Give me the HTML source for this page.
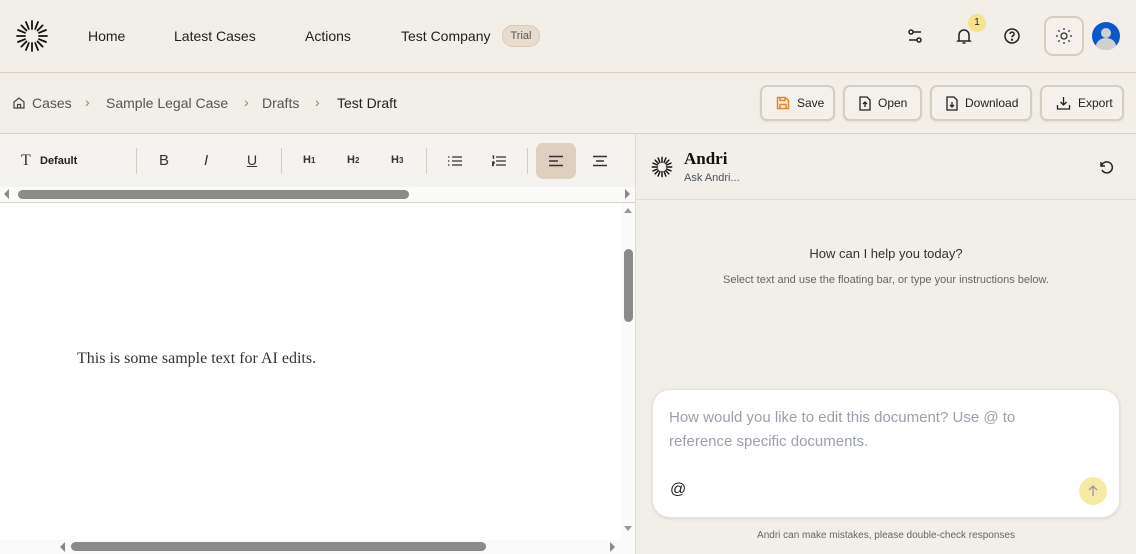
<!DOCTYPE html>
<html><head><meta charset="utf-8"><style>
*{box-sizing:border-box;margin:0;padding:0}
body{width:1136px;height:554px;overflow:hidden;background:#f2efe9;font-family:"Liberation Sans",sans-serif;color:#1f1f1f;position:relative}
.abs{position:absolute}
.nav{font-size:14px;top:28px}
.btn{position:absolute;top:85px;height:36px;border:2px solid #d7cdbf;border-radius:7px;background:#f4f1ec;font-size:12px;display:flex;align-items:center;gap:7px;padding-left:14px;box-shadow:0 1px 2px rgba(0,0,0,.08)}
.tb{position:absolute;top:154px;font-size:11px;color:#333}
.sep{position:absolute;top:148px;width:1px;height:26px;background:#d4cdc3}
svg{display:block}
</style></head><body>
<svg class="abs" style="left:15px;top:19px" width="34" height="34" viewBox="0 0 34 34">
<g stroke="#111" stroke-width="1.8" stroke-linecap="round">
<line x1="17" y1="2" x2="17" y2="10"/><line x1="17" y1="24" x2="17" y2="32"/>
<line x1="2" y1="17" x2="10" y2="17"/><line x1="24" y1="17" x2="32" y2="17"/>
<line x1="6.4" y1="6.4" x2="11.5" y2="11.5"/><line x1="22.5" y1="22.5" x2="27.6" y2="27.6"/>
<line x1="27.6" y1="6.4" x2="22.5" y2="11.5"/><line x1="11.5" y1="22.5" x2="6.4" y2="27.6"/>
<line x1="11" y1="3" x2="13.8" y2="10"/><line x1="23" y1="3" x2="20.2" y2="10"/>
<line x1="11" y1="31" x2="13.8" y2="24"/><line x1="23" y1="31" x2="20.2" y2="24"/>
<line x1="3" y1="11" x2="10" y2="13.8"/><line x1="3" y1="23" x2="10" y2="20.2"/>
<line x1="31" y1="11" x2="24" y2="13.8"/><line x1="31" y1="23" x2="24" y2="20.2"/>
</g></svg>
<div class="abs nav" style="left:88px">Home</div>
<div class="abs nav" style="left:174px">Latest Cases</div>
<div class="abs nav" style="left:305px">Actions</div>
<div class="abs nav" style="left:401px">Test Company</div>
<div class="abs" style="left:502px;top:25px;height:22px;width:38px;border-radius:11px;background:#e8dccf;border:1px solid #d8c9b8;font-size:11px;color:#555;text-align:center;line-height:20px">Trial</div>
<svg class="abs" style="left:906px;top:27px" width="18" height="18" viewBox="0 0 18 18" fill="none" stroke="#222" stroke-width="1.5"><circle cx="5" cy="5" r="2"/><line x1="7" y1="5" x2="15" y2="5"/><circle cx="13" cy="13" r="2"/><line x1="3" y1="13" x2="11" y2="13"/></svg>
<svg class="abs" style="left:955px;top:27px" width="18" height="18" viewBox="0 0 18 18" fill="none" stroke="#222" stroke-width="1.5"><path d="M4 13V8a5 5 0 0 1 10 0v5l1 1H3z"/><path d="M7.5 16h3"/></svg>
<div class="abs" style="left:968px;top:14px;width:18px;height:18px;border-radius:9px;background:#f6e38a;font-size:10px;text-align:center;line-height:18px">1</div>
<svg class="abs" style="left:1003px;top:27px" width="18" height="18" viewBox="0 0 18 18" fill="none" stroke="#222" stroke-width="1.5"><circle cx="9" cy="9" r="7"/><path d="M7 7a2 2 0 1 1 2.5 2c-.5.2-.5.6-.5 1.3"/><circle cx="9" cy="12.7" r=".4" fill="#222"/></svg>
<div class="abs" style="left:1044px;top:16px;width:40px;height:40px;border:2px solid #d7cdbf;border-radius:9px;background:#f4f1ec"></div>
<svg class="abs" style="left:1054px;top:26px" width="20" height="20" viewBox="0 0 20 20" fill="none" stroke="#333" stroke-width="1.3"><circle cx="10" cy="10" r="3"/><path d="M10 2v2M10 16v2M2 10h2M16 10h2M4.3 4.3l1.4 1.4M14.3 14.3l1.4 1.4M4.3 15.7l1.4-1.4M14.3 5.7l1.4-1.4"/></svg>
<svg class="abs" style="left:1092px;top:22px" width="28" height="28" viewBox="0 0 28 28"><circle cx="14" cy="14" r="14" fill="#0b58c9"/><circle cx="14" cy="11" r="5" fill="#d0d0d0"/><path d="M4 24a10 8 0 0 1 20 0a14 14 0 0 1-20 0z" fill="#d0d0d0"/></svg>
<div class="abs" style="left:0;top:72px;width:1136px;height:1px;background:#d9cfc3"></div>
<svg class="abs" style="left:12px;top:96px" width="14" height="14" viewBox="0 0 14 14" fill="none" stroke="#444" stroke-width="1.2"><path d="M2 6l5-4 5 4v6H2z"/><path d="M5.5 12V8.5h3V12"/></svg>
<div class="abs" style="left:32px;top:95px;font-size:14px;color:#555">Cases</div>
<div class="abs" style="left:85px;top:94px;font-size:14px;color:#7a8a70">›</div>
<div class="abs" style="left:106px;top:95px;font-size:14px;color:#555">Sample Legal Case</div>
<div class="abs" style="left:244px;top:94px;font-size:14px;color:#7a8a70">›</div>
<div class="abs" style="left:262px;top:95px;font-size:14px;color:#555">Drafts</div>
<div class="abs" style="left:315px;top:94px;font-size:14px;color:#7a8a70">›</div>
<div class="abs" style="left:337px;top:95px;font-size:14px;color:#222">Test Draft</div>
<div class="btn" style="left:760px;width:75px"><svg width="14" height="14" viewBox="0 0 14 14" fill="none" stroke="#e8842a" stroke-width="1.5"><path d="M1.5 1.5h8l3 3v8h-11z"/><path d="M4 1.5v3h5v-3M4 12.5v-4h6v4"/></svg>Save</div>
<div class="btn" style="left:843px;width:79px"><svg width="12" height="15" viewBox="0 0 12 15" fill="none" stroke="#222" stroke-width="1.3"><path d="M1 1h7l3 3v10H1z"/><path d="M6 11V6M4 8l2-2 2 2"/></svg>Open</div>
<div class="btn" style="left:930px;width:102px"><svg width="12" height="15" viewBox="0 0 12 15" fill="none" stroke="#222" stroke-width="1.3"><path d="M1 1h7l3 3v10H1z"/><path d="M6 6v5M4 9l2 2 2-2"/></svg>Download</div>
<div class="btn" style="left:1040px;width:84px"><svg width="15" height="15" viewBox="0 0 15 15" fill="none" stroke="#222" stroke-width="1.3"><path d="M7.5 1v8M4.5 6l3 3 3-3M1.5 9v4h12V9"/></svg>Export</div>
<div class="abs" style="left:0;top:133px;width:1136px;height:1px;background:#d9cfc3"></div>
<div class="abs" style="left:0;top:134px;width:635px;height:53px;background:#f4f3ef"></div>
<div class="tb" style="left:21px;top:152px;font-size:16px;font-family:'Liberation Serif',serif">T</div>
<div class="tb" style="left:40px;top:155px;font-weight:bold;color:#222">Default</div>
<div class="sep" style="left:136px"></div>
<div class="tb" style="left:159px;font-size:15px;top:152px">B</div>
<div class="tb" style="left:204px;font-size:15px;top:152px;font-style:italic">I</div>
<div class="tb" style="left:247px;font-size:14px;top:152px;text-decoration:underline">U</div>
<div class="sep" style="left:281px"></div>
<div class="tb" style="left:303px;font-weight:bold">H<small style="font-size:8px">1</small></div>
<div class="tb" style="left:347px;font-weight:bold">H<small style="font-size:8px">2</small></div>
<div class="tb" style="left:391px;font-weight:bold">H<small style="font-size:8px">3</small></div>
<div class="sep" style="left:426px"></div>
<svg class="abs" style="left:448px;top:155px" width="14" height="12" viewBox="0 0 14 12" stroke="#333" stroke-width="1.3"><path d="M4 2h10M4 6h10M4 10h10M0 2h1.5M0 6h1.5M0 10h1.5"/></svg>
<svg class="abs" style="left:492px;top:155px" width="14" height="12" viewBox="0 0 14 12" stroke="#333" stroke-width="1.3"><path d="M4 2h10M4 6h10M4 10h10M0.5 1h1v3M0 7h2v1.5H0v2h2"/></svg>
<div class="sep" style="left:527px"></div>
<div class="abs" style="left:536px;top:143px;width:40px;height:36px;border-radius:7px;background:#ddd0bf"></div>
<svg class="abs" style="left:549px;top:155px" width="14" height="12" viewBox="0 0 14 12" stroke="#333" stroke-width="1.5"><path d="M0 1.5h14M0 6h9M0 10.5h14"/></svg>
<svg class="abs" style="left:593px;top:155px" width="14" height="12" viewBox="0 0 14 12" stroke="#333" stroke-width="1.5"><path d="M0 1.5h14M3 6h8M0 10.5h14"/></svg>
<div class="abs" style="left:0;top:187px;width:635px;height:15px;background:#fafafa"></div>
<div class="abs" style="left:18px;top:190px;width:391px;height:9px;border-radius:5px;background:#8a8a8a"></div>
<div class="abs" style="left:4px;top:189px;width:0;height:0;border:5px solid transparent;border-right:5px solid #888;border-left:0"></div>
<div class="abs" style="left:625px;top:189px;width:0;height:0;border:5px solid transparent;border-left:5px solid #888;border-right:0"></div>
<div class="abs" style="left:0;top:202px;width:635px;height:1px;background:#d9cfc3"></div>
<div class="abs" style="left:0;top:203px;width:621px;height:337px;background:#fff"></div>
<div class="abs" style="left:621px;top:203px;width:14px;height:337px;background:#fafafa"></div>
<div class="abs" style="left:624px;top:249px;width:9px;height:73px;border-radius:5px;background:#8a8a8a"></div>
<div class="abs" style="left:624px;top:208px;border:4px solid transparent;border-bottom:5px solid #999;border-top:0"></div>
<div class="abs" style="left:624px;top:526px;border:4px solid transparent;border-top:5px solid #999;border-bottom:0"></div>
<div class="abs" style="left:0;top:540px;width:635px;height:14px;background:#fafafa"></div>
<div class="abs" style="left:71px;top:542px;width:415px;height:9px;border-radius:5px;background:#8a8a8a"></div>
<div class="abs" style="left:60px;top:542px;border:5px solid transparent;border-right:5px solid #888;border-left:0"></div>
<div class="abs" style="left:610px;top:542px;border:5px solid transparent;border-left:5px solid #888;border-right:0"></div>
<div class="abs" style="left:77px;top:350px;font-family:'Liberation Serif',serif;font-size:16px;color:#333">This is some sample text for AI edits.</div>
<div class="abs" style="left:635px;top:134px;width:1px;height:420px;background:#e2dcd3"></div>
<svg class="abs" style="left:651px;top:156px" width="22" height="22" viewBox="0 0 34 34"><g stroke="#111" stroke-width="2.2" stroke-linecap="round">
<line x1="17" y1="2" x2="17" y2="10"/><line x1="17" y1="24" x2="17" y2="32"/><line x1="2" y1="17" x2="10" y2="17"/><line x1="24" y1="17" x2="32" y2="17"/>
<line x1="6.4" y1="6.4" x2="11.5" y2="11.5"/><line x1="22.5" y1="22.5" x2="27.6" y2="27.6"/><line x1="27.6" y1="6.4" x2="22.5" y2="11.5"/><line x1="11.5" y1="22.5" x2="6.4" y2="27.6"/>
<line x1="11" y1="3" x2="13.8" y2="10"/><line x1="23" y1="3" x2="20.2" y2="10"/><line x1="11" y1="31" x2="13.8" y2="24"/><line x1="23" y1="31" x2="20.2" y2="24"/>
<line x1="3" y1="11" x2="10" y2="13.8"/><line x1="3" y1="23" x2="10" y2="20.2"/><line x1="31" y1="11" x2="24" y2="13.8"/><line x1="31" y1="23" x2="24" y2="20.2"/></g></svg>
<div class="abs" style="left:684px;top:149px;font-family:'Liberation Serif',serif;font-weight:bold;font-size:17px;color:#111">Andri</div>
<div class="abs" style="left:684px;top:172px;font-size:11px;color:#4a5262">Ask Andri...</div>
<svg class="abs" style="left:1098px;top:159px" width="16" height="16" viewBox="0 0 16 16" fill="none" stroke="#222" stroke-width="1.5"><path d="M3 3v4h4"/><path d="M3.5 7A5.5 5.5 0 1 1 4 11"/></svg>
<div class="abs" style="left:636px;top:199px;width:500px;height:1px;background:#e2dcd3"></div>
<div class="abs" style="left:636px;top:246px;width:500px;text-align:center;font-size:13px;color:#333">How can I help you today?</div>
<div class="abs" style="left:636px;top:274px;width:500px;text-align:center;font-size:11px;color:#666">Select text and use the floating bar, or type your instructions below.</div>
<div class="abs" style="left:652px;top:389px;width:468px;height:129px;background:#fff;border-radius:18px;border:1px solid #e6e2dc;box-shadow:0 1px 3px rgba(0,0,0,.1)"></div>
<div class="abs" style="left:669px;top:406px;width:400px;font-size:15px;line-height:24px;color:#9aa0aa">How would you like to edit this document? Use @ to reference specific documents.</div>
<div class="abs" style="left:670px;top:481px;font-size:16px;color:#222">@</div>
<div class="abs" style="left:1079px;top:477px;width:28px;height:28px;border-radius:14px;background:#f8eaa6"></div>
<svg class="abs" style="left:1087px;top:485px" width="12" height="12" viewBox="0 0 12 12" fill="none" stroke="#999" stroke-width="1.3"><path d="M6 11V1M2 5l4-4 4 4"/></svg>
<div class="abs" style="left:636px;top:530px;width:500px;text-align:center;font-size:10px;color:#666">Andri can make mistakes, please double-check responses</div>
</body></html>
